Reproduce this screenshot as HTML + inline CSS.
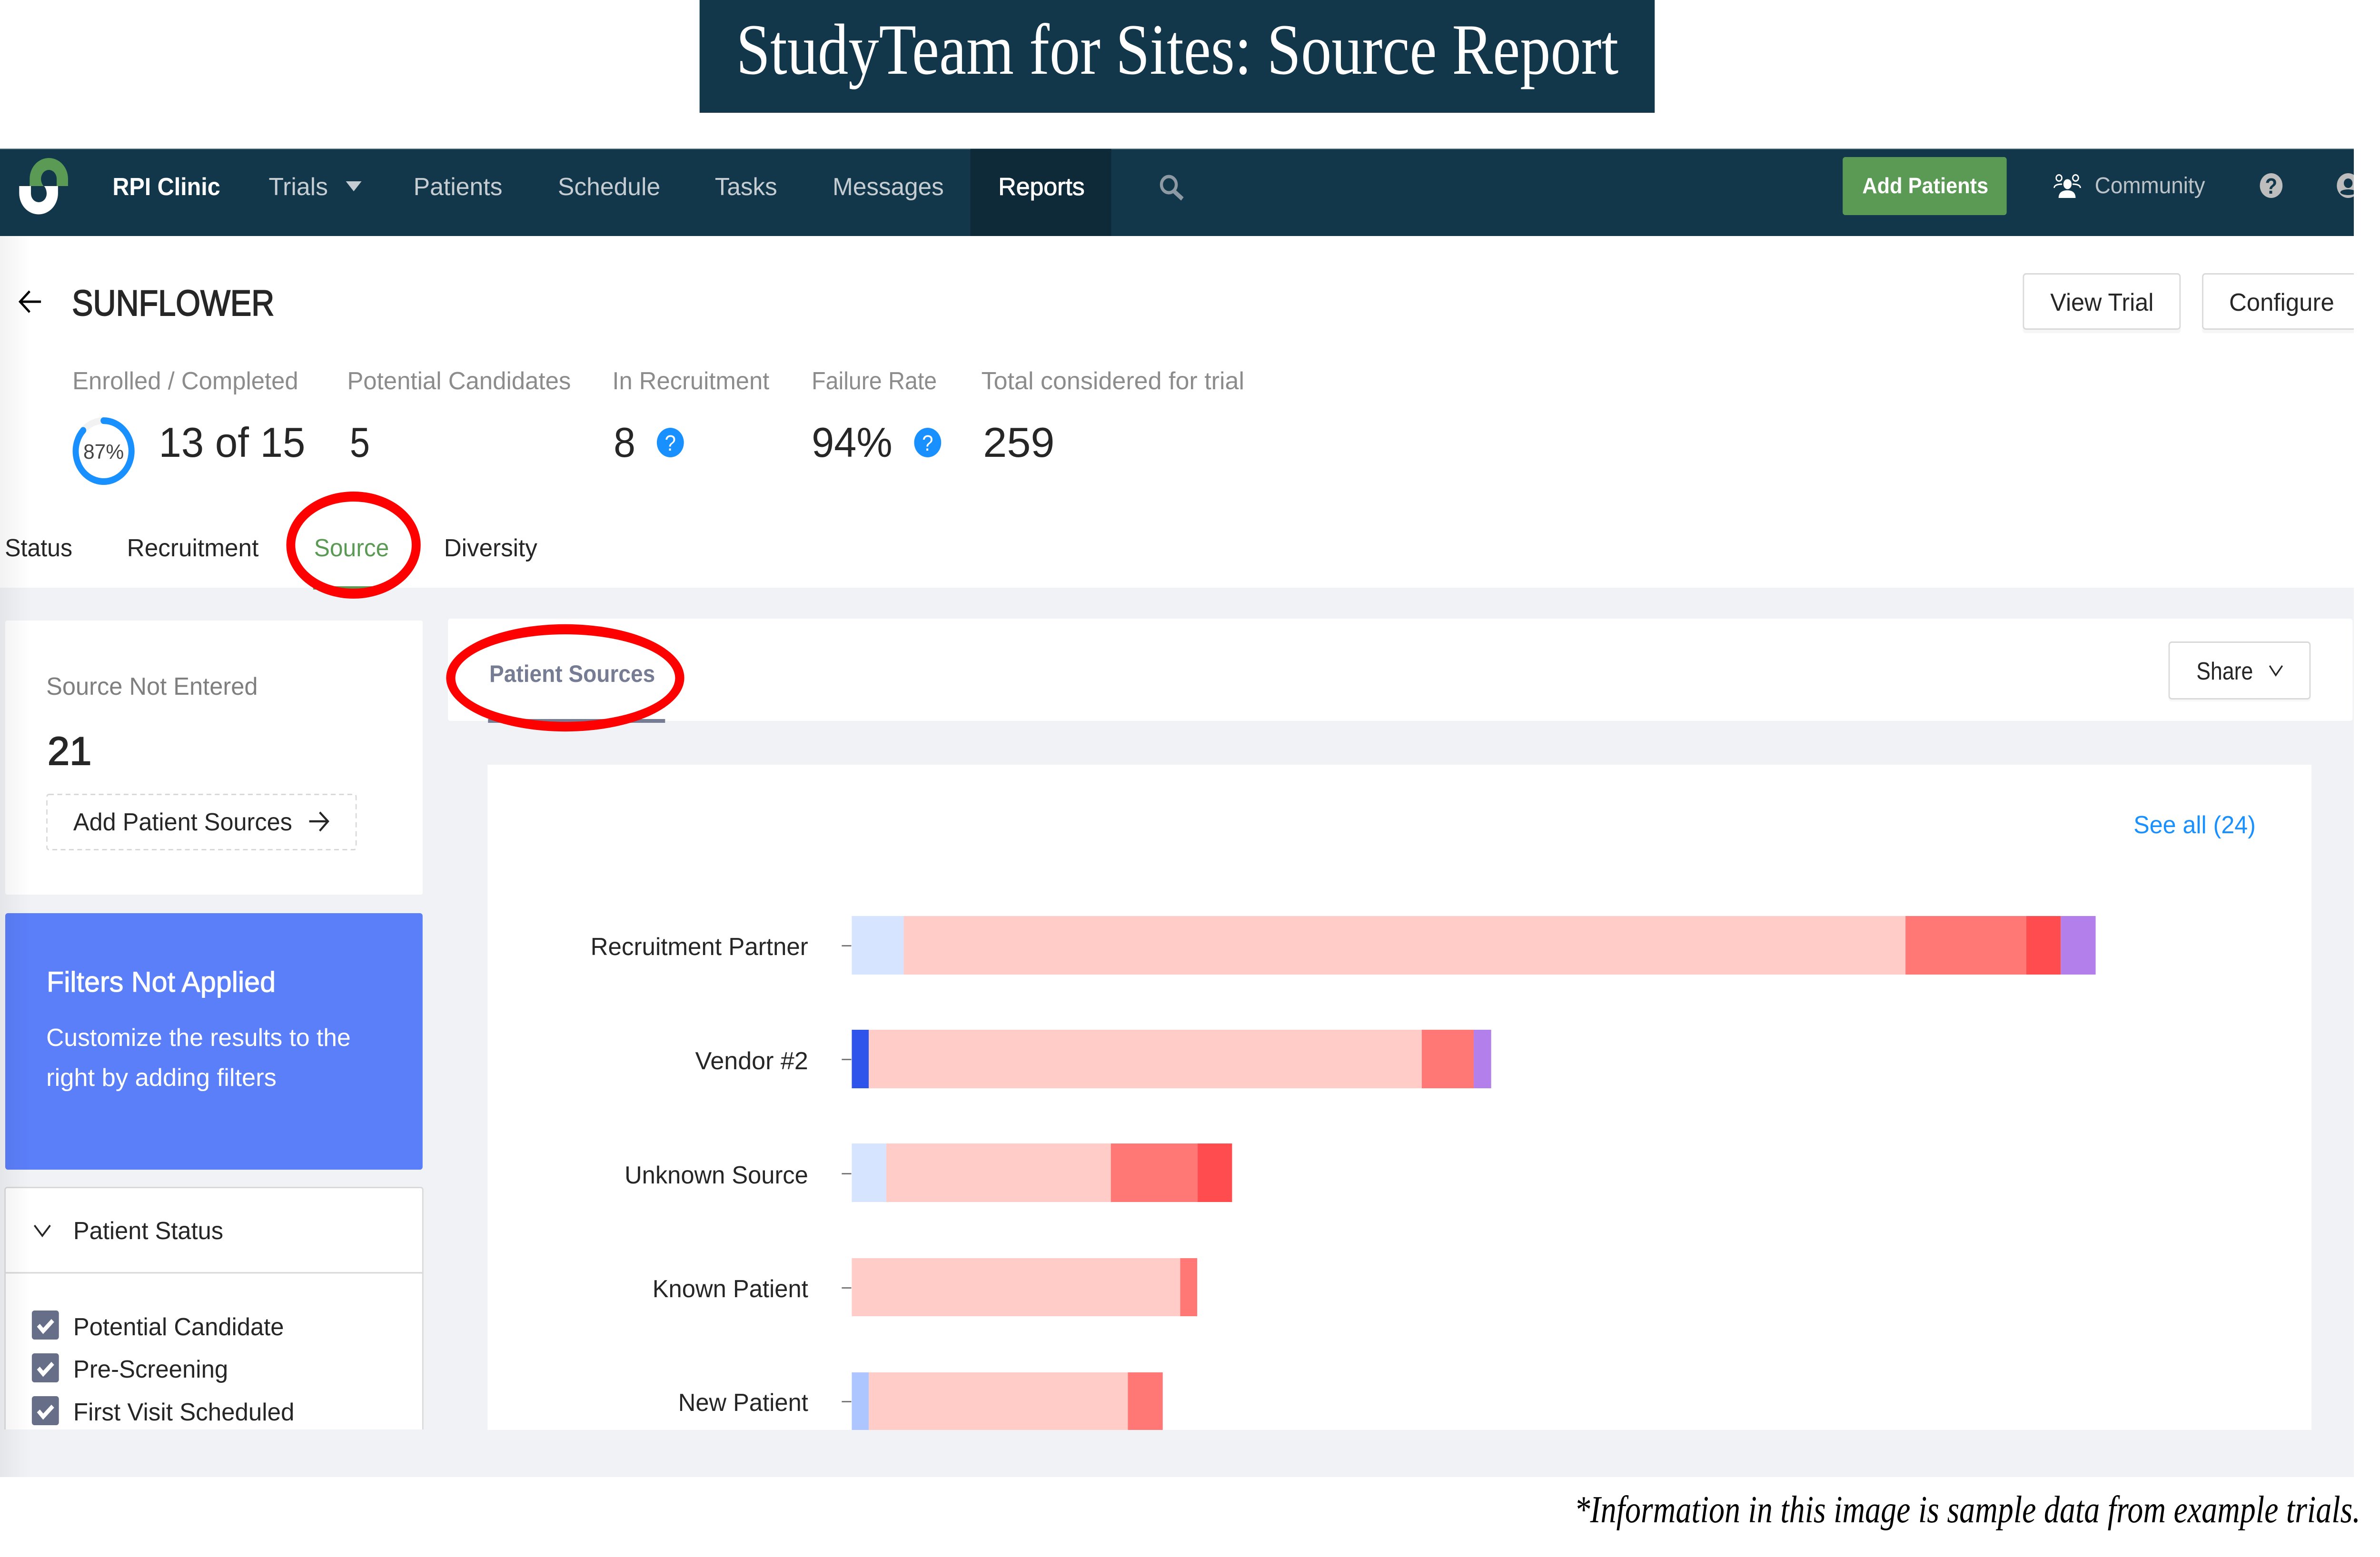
<!DOCTYPE html>
<html>
<head>
<meta charset="utf-8">
<style>
html,body{margin:0;padding:0;background:#fff;width:100%;height:100%;overflow:hidden}
svg{display:block;position:absolute;left:0;top:0;width:100vw;height:100vh}
text{font-family:"Liberation Sans",sans-serif;white-space:pre}
.a{font-family:"Liberation Sans",sans-serif}
.s{font-family:"Liberation Serif",serif}
</style>
</head>
<body>
<svg xmlns="http://www.w3.org/2000/svg" viewBox="0 0 5457 3272" preserveAspectRatio="none">
<defs>
<linearGradient id="lg" x1="0" x2="1" y1="0" y2="0"><stop offset="0" stop-color="#000" stop-opacity=".05"/><stop offset="1" stop-color="#000" stop-opacity="0"/></linearGradient>
</defs>
<rect width="5457" height="3272" fill="#fff"/>

<!-- title -->
<rect x="1604" y="0" width="2190" height="237" fill="#12374a"/>
<text class="s" x="1688" y="155" font-size="152" fill="#fff" textLength="2023" lengthAdjust="spacingAndGlyphs">StudyTeam for Sites: Source Report</text>

<!-- nav -->
<rect x="0" y="312" width="5397" height="184" fill="#12374a"/>
<rect x="0" y="312" width="5397" height="1.5" fill="#7f98a3"/>
<rect x="2225" y="313" width="323" height="183" fill="#0e2a38"/>
<path d="M68 391V376A44 44 0 0 1 156 376V391H130V376A18 19 0 0 0 94 376C94 381 96 387 100 391Z" fill="#5a9a55"/>
<path d="M44 391H71V407A18 18 0 0 0 107 407C107 401 105 395 101 391H133V406A44.5 44.5 0 0 1 44 406Z" fill="#fff"/>
<g font-size="52" fill="#c5cdd2">
<text x="258" y="410" fill="#fff" font-weight="700" textLength="247" lengthAdjust="spacingAndGlyphs">RPI Clinic</text>
<text x="616" y="410" textLength="136" lengthAdjust="spacingAndGlyphs">Trials</text>
<text x="948" y="410" textLength="204" lengthAdjust="spacingAndGlyphs">Patients</text>
<text x="1279" y="410" textLength="235" lengthAdjust="spacingAndGlyphs">Schedule</text>
<text x="1639" y="410" textLength="143" lengthAdjust="spacingAndGlyphs">Tasks</text>
<text x="1909" y="410" textLength="255" lengthAdjust="spacingAndGlyphs">Messages</text>
<text x="2289" y="410" fill="#fff" stroke="#fff" stroke-width="1" textLength="198" lengthAdjust="spacingAndGlyphs">Reports</text>
</g>
<polygon points="793,381 829,381 811,402" fill="#c5cdd2"/>
<circle cx="2680" cy="388" r="17" fill="none" stroke="#8d9aa3" stroke-width="7"/>
<path d="M2692 402L2711 418" stroke="#8d9aa3" stroke-width="9" fill="none"/>
<rect x="4225" y="330" width="376" height="122" rx="6" fill="#5a9a55"/>
<text x="4270" y="406" font-size="46" font-weight="700" fill="#fff" textLength="289" lengthAdjust="spacingAndGlyphs">Add Patients</text>
<!-- community icon -->
<ellipse cx="4740.5" cy="387" rx="9.5" ry="10.5" fill="#fff"/>
<path d="M4720 416C4720 405 4728 400 4740 400C4752 400 4759 405 4759 416Z" fill="#fff"/>
<circle cx="4721" cy="374" r="6.5" fill="none" stroke="#fff" stroke-width="3"/>
<circle cx="4759" cy="374" r="6.5" fill="none" stroke="#fff" stroke-width="3"/>
<path d="M4710 395C4710 390 4716 387 4728 387M4770 395C4770 390 4764 387 4752 387" fill="none" stroke="#fff" stroke-width="3"/>
<text x="4803" y="406" font-size="48" fill="#bcc3c8" textLength="253" lengthAdjust="spacingAndGlyphs">Community</text>
<circle cx="5207.5" cy="390" r="26" fill="#bdbdbd"/>
<text x="5207.5" y="407" font-size="46" font-weight="700" fill="#12374a" text-anchor="middle">?</text>
<circle cx="5384" cy="390" r="26" fill="#bdbdbd"/>
<ellipse cx="5384" cy="385" rx="10" ry="10" fill="#12374a"/>
<ellipse cx="5384" cy="404" rx="18" ry="6" fill="#12374a"/>

<!-- header -->
<path d="M94 634H48M68 612L46 634L68 656" fill="none" stroke="#000" stroke-width="5"/>
<text x="165" y="663" font-size="76" fill="#262626" stroke="#262626" stroke-width="2" textLength="464" lengthAdjust="spacingAndGlyphs">SUNFLOWER</text>
<rect x="4638" y="580" width="362" height="120" rx="6" fill="#f6f6f6"/>
<rect x="4639.5" y="575.5" width="359" height="116" rx="6" fill="#fff" stroke="#d9d9d9" stroke-width="3"/>
<text x="4701" y="653" font-size="52" fill="#262626" textLength="237" lengthAdjust="spacingAndGlyphs">View Trial</text>
<rect x="5049" y="580" width="400" height="120" rx="6" fill="#f6f6f6"/>
<rect x="5050.5" y="575.5" width="400" height="116" rx="6" fill="#fff" stroke="#d9d9d9" stroke-width="3"/>
<text x="5111" y="653" font-size="52" fill="#262626" textLength="241" lengthAdjust="spacingAndGlyphs">Configure</text>

<g font-size="52" fill="#8c8c8c">
<text x="166" y="818" textLength="518" lengthAdjust="spacingAndGlyphs">Enrolled / Completed</text>
<text x="796" y="818" textLength="513" lengthAdjust="spacingAndGlyphs">Potential Candidates</text>
<text x="1404" y="818" textLength="360" lengthAdjust="spacingAndGlyphs">In Recruitment</text>
<text x="1861" y="818" textLength="287" lengthAdjust="spacingAndGlyphs">Failure Rate</text>
<text x="2250" y="818" textLength="603" lengthAdjust="spacingAndGlyphs">Total considered for trial</text>
</g>
<g font-size="88" fill="#262626">
<text x="364" y="960" textLength="336" lengthAdjust="spacingAndGlyphs">13 of 15</text>
<text x="802" y="960" textLength="46" lengthAdjust="spacingAndGlyphs">5</text>
<text x="1407" y="960" textLength="50" lengthAdjust="spacingAndGlyphs">8</text>
<text x="1861" y="960" textLength="185" lengthAdjust="spacingAndGlyphs">94%</text>
<text x="2254" y="960" textLength="164" lengthAdjust="spacingAndGlyphs">259</text>
</g>
<circle cx="237.5" cy="948" r="64" fill="none" stroke="#f2f2f2" stroke-width="14"/>
<path d="M237.5 884A64 64 0 1 1 190.7 904.4" fill="none" stroke="#1890ff" stroke-width="14" stroke-linecap="round"/>
<text x="191" y="964" font-size="44" fill="#444" textLength="93" lengthAdjust="spacingAndGlyphs">87%</text>
<circle cx="1537" cy="930" r="31" fill="#1890ff"/>
<text x="1537" y="947" font-size="46" fill="#fff" text-anchor="middle">?</text>
<circle cx="2127" cy="930" r="31" fill="#1890ff"/>
<text x="2127" y="947" font-size="46" fill="#fff" text-anchor="middle">?</text>

<!-- tabs -->
<g font-size="52" fill="#262626">
<text x="11" y="1169" textLength="155" lengthAdjust="spacingAndGlyphs">Status</text>
<text x="291" y="1169" textLength="302" lengthAdjust="spacingAndGlyphs">Recruitment</text>
<text x="720" y="1169" fill="#5a9a55" textLength="172" lengthAdjust="spacingAndGlyphs">Source</text>
<text x="1018" y="1169" textLength="214" lengthAdjust="spacingAndGlyphs">Diversity</text>
</g>

<!-- gray content -->
<rect x="0" y="1235" width="5397" height="1869" fill="#f0f2f6"/>
<rect x="718" y="1232" width="174" height="7" fill="#5a9a55"/>

<!-- left cards -->
<rect x="12" y="1304" width="957" height="576" rx="4" fill="#fff"/>
<text x="106" y="1460" font-size="52" fill="#7f7f7f" textLength="485" lengthAdjust="spacingAndGlyphs">Source Not Entered</text>
<text x="109" y="1607" font-size="84" fill="#262626" stroke="#262626" stroke-width="2" textLength="101" lengthAdjust="spacingAndGlyphs">21</text>
<rect x="107.5" y="1669.5" width="709" height="116" rx="5" fill="none" stroke="#d9d9d9" stroke-width="3" stroke-dasharray="11 8"/>
<text x="168" y="1745" font-size="52" fill="#262626" textLength="502" lengthAdjust="spacingAndGlyphs">Add Patient Sources</text>
<path d="M709 1726H750M733 1707L752 1726L733 1746" fill="none" stroke="#262626" stroke-width="4.5"/>

<rect x="12" y="1919" width="957" height="539" rx="6" fill="#5b7ef9"/>
<text x="107" y="2084" font-size="60" fill="#fff" stroke="#fff" stroke-width="1" textLength="525" lengthAdjust="spacingAndGlyphs">Filters Not Applied</text>
<text x="106" y="2198" font-size="52" fill="#fff" textLength="698" lengthAdjust="spacingAndGlyphs">Customize the results to the</text>
<text x="106" y="2282" font-size="52" fill="#fff" textLength="528" lengthAdjust="spacingAndGlyphs">right by adding filters</text>

<rect x="11.5" y="2495.5" width="958" height="560" rx="5" fill="#fff" stroke="#d9d9d9" stroke-width="3"/>
<rect x="12" y="2673" width="957" height="3.5" fill="#dcdcdc"/>
<path d="M79 2575L97 2597L115 2575" fill="none" stroke="#262626" stroke-width="4"/>
<text x="168" y="2604" font-size="52" fill="#262626" textLength="344" lengthAdjust="spacingAndGlyphs">Patient Status</text>
<g>
<rect x="73" y="2754" width="62" height="61" rx="6" fill="#676e87"/>
<path d="M88 2785L99 2797L121 2775" fill="none" stroke="#fff" stroke-width="9"/>
<rect x="73" y="2844" width="62" height="61" rx="6" fill="#676e87"/>
<path d="M88 2875L99 2887L121 2865" fill="none" stroke="#fff" stroke-width="9"/>
<rect x="73" y="2934" width="62" height="61" rx="6" fill="#676e87"/>
<path d="M88 2965L99 2977L121 2955" fill="none" stroke="#fff" stroke-width="9"/>
</g>
<g font-size="52" fill="#262626">
<text x="168" y="2806" textLength="483" lengthAdjust="spacingAndGlyphs">Potential Candidate</text>
<text x="168" y="2895" textLength="355" lengthAdjust="spacingAndGlyphs">Pre-Screening</text>
<text x="168" y="2985" textLength="507" lengthAdjust="spacingAndGlyphs">First Visit Scheduled</text>
</g>
<rect x="0" y="3004" width="1000" height="100" fill="#f0f2f6"/>

<!-- tab panel -->
<rect x="1027" y="1300" width="4367" height="215" rx="6" fill="#fff"/>
<rect x="1119" y="1511" width="406" height="8" fill="#767c93"/>
<text x="1122" y="1433" font-size="50" font-weight="700" fill="#767c93" textLength="380" lengthAdjust="spacingAndGlyphs">Patient Sources</text>
<rect x="4972" y="1352" width="326" height="122" rx="6" fill="#f8f8f8"/>
<rect x="4973.5" y="1349.5" width="323" height="119" rx="6" fill="#fff" stroke="#d9d9d9" stroke-width="3"/>
<text x="5036" y="1428" font-size="52" fill="#262626" textLength="130" lengthAdjust="spacingAndGlyphs">Share</text>
<path d="M5204 1399L5218 1419L5233 1399" fill="none" stroke="#262626" stroke-width="3.5"/>

<!-- chart -->
<rect x="1118" y="1607" width="4182" height="1398" fill="#fff"/>
<text x="4892" y="1751" font-size="52" fill="#1890ff" textLength="280" lengthAdjust="spacingAndGlyphs">See all (24)</text>
<g font-size="52" fill="#262626">
<text x="1354" y="2007" textLength="499" lengthAdjust="spacingAndGlyphs">Recruitment Partner</text>
<text x="1594" y="2247" textLength="259" lengthAdjust="spacingAndGlyphs">Vendor #2</text>
<text x="1432" y="2487" textLength="421" lengthAdjust="spacingAndGlyphs">Unknown Source</text>
<text x="1496" y="2726" textLength="357" lengthAdjust="spacingAndGlyphs">Known Patient</text>
<text x="1555" y="2965" textLength="298" lengthAdjust="spacingAndGlyphs">New Patient</text>
</g>
<g fill="#7a7a7a">
<rect x="1930" y="1986" width="22" height="3"/>
<rect x="1930" y="2225" width="22" height="3"/>
<rect x="1930" y="2465" width="22" height="3"/>
<rect x="1930" y="2705" width="22" height="3"/>
<rect x="1930" y="2944" width="22" height="3"/>
</g>
<!-- row 1 -->
<rect x="1953" y="1925" width="119" height="123" fill="#d6e4ff"/>
<rect x="2072" y="1925" width="2297" height="123" fill="#ffccc7"/>
<rect x="4369" y="1925" width="277" height="123" fill="#ff7875"/>
<rect x="4646" y="1925" width="79" height="123" fill="#ff4d4f"/>
<rect x="4725" y="1925" width="80" height="123" fill="#b37feb"/>
<!-- row 2 -->
<rect x="1953" y="2164" width="39" height="123" fill="#2f54eb"/>
<rect x="1992" y="2164" width="1268" height="123" fill="#ffccc7"/>
<rect x="3260" y="2164" width="119" height="123" fill="#ff7875"/>
<rect x="3379" y="2164" width="40" height="123" fill="#b37feb"/>
<!-- row 3 -->
<rect x="1953" y="2403" width="79" height="123" fill="#d6e4ff"/>
<rect x="2032" y="2403" width="515" height="123" fill="#ffccc7"/>
<rect x="2547" y="2403" width="199" height="123" fill="#ff7875"/>
<rect x="2746" y="2403" width="79" height="123" fill="#ff4d4f"/>
<!-- row 4 -->
<rect x="1953" y="2644" width="753" height="122" fill="#ffccc7"/>
<rect x="2706" y="2644" width="39" height="122" fill="#ff7875"/>
<!-- row 5 -->
<rect x="1953" y="2884" width="39" height="121" fill="#adc6ff"/>
<rect x="1992" y="2884" width="594" height="121" fill="#ffccc7"/>
<rect x="2586" y="2884" width="80" height="121" fill="#ff7875"/>

<!-- left shade -->
<rect x="0" y="496" width="70" height="2608" fill="url(#lg)"/>

<!-- right crop -->
<rect x="5397" y="312" width="60" height="2792" fill="#fff"/>

<!-- red ellipses -->
<path fill-rule="evenodd" fill="#ff0000" d="M656.5 1145.5a154 112.5 0 1 0 308 0a154 112.5 0 1 0 -308 0ZM677 1145.5a133.5 91.5 0 1 1 267 0a133.5 91.5 0 1 1 -267 0Z"/>
<path fill-rule="evenodd" fill="#ff0000" d="M1023 1424.5a273 112.7 0 1 0 546 0a273 112.7 0 1 0 -546 0ZM1044 1425a252 92 0 1 1 504 0a252 92 0 1 1 -504 0Z"/>

<!-- footer -->
<text class="s" x="3610" y="3199" font-size="80" font-style="italic" fill="#000" textLength="1802" lengthAdjust="spacingAndGlyphs">*Information in this image is sample data from example trials.</text>
</svg>
</body>
</html>
